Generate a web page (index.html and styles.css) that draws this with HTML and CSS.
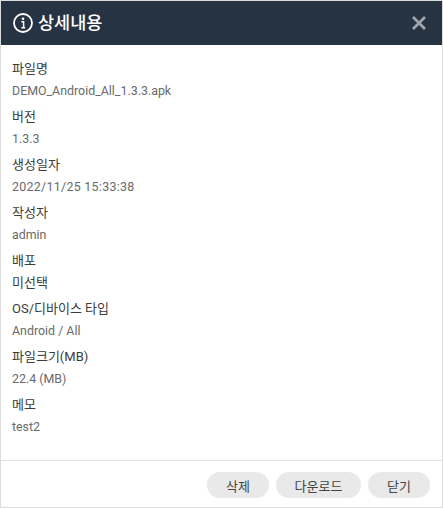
FILE: index.html
```html
<!DOCTYPE html>
<html lang="ko">
<head>
<meta charset="utf-8">
<title>상세내용</title>
<link rel="stylesheet" href="styles.css">
</head>
<body>
<div class="dialog">
  <header class="head">
    <div class="title">
      <svg class="info" viewBox="0 0 22 22" width="22" height="22" aria-hidden="true">
        <circle cx="11" cy="11" r="9" fill="none" stroke="#fff" stroke-width="1.8"/>
        <circle cx="11" cy="6.8" r="1.3" fill="#fff"/>
        <path d="M9.4 9.7H11.6V15.6M9.4 15.7H13.2" fill="none" stroke="#fff" stroke-width="1.5"/>
      </svg>
      <h1>상세내용</h1>
    </div>
    <svg class="close" viewBox="0 0 16 16" width="16" height="16" aria-hidden="true">
      <path d="M2 2L14 14M14 2L2 14" stroke="#a0a6ae" stroke-width="2.8" fill="none"/>
    </svg>
  </header>
  <main class="body">
    <div class="row"><div class="label">파일명</div><div class="value">DEMO_Android_All_1.3.3.apk</div></div>
    <div class="row"><div class="label">버전</div><div class="value">1.3.3</div></div>
    <div class="row"><div class="label">생성일자</div><div class="value value-date">2022/11/25 15:33:38</div></div>
    <div class="row"><div class="label">작성자</div><div class="value">admin</div></div>
    <div class="row"><div class="label">배포</div><div class="value value-dark">미선택</div></div>
    <div class="row"><div class="label">OS/디바이스 타입</div><div class="value">Android / All</div></div>
    <div class="row"><div class="label">파일크기(MB)</div><div class="value">22.4 (MB)</div></div>
    <div class="row"><div class="label">메모</div><div class="value">test2</div></div>
  </main>
  <footer class="foot">
    <button class="btn btn-del">삭제</button>
    <button class="btn btn-down">다운로드</button>
    <button class="btn btn-close">닫기</button>
  </footer>
</div>
</body>
</html>
```
FILE: styles.css
```css
* { box-sizing: border-box; }
html, body { margin: 0; padding: 0; background: #fff; }
body { font-family: Roboto, "Noto Sans CJK KR", sans-serif; }
.dialog {
  width: 443px;
  height: 508px;
  border: 1px solid #dcdcdc;
  display: flex;
  flex-direction: column;
  background: #fff;
}
.head {
  height: 44px;
  flex: none;
  background: #263343;
  display: flex;
  align-items: center;
  justify-content: space-between;
  padding: 0 15px 0 11px;
}
.title { display: flex; align-items: center; gap: 4px; }
.info { display: block; }
.title h1 { margin: 0; font-size: 17.5px; font-weight: 500; color: #fff; line-height: 22px; }
.close { display: block; }
.body { flex: 1; padding: 12px 11px 0; display: flex; flex-direction: column; }
.row { height: 48px; display: flex; flex-direction: column; }
.label { height: 23px; line-height: 24px; font-size: 13px; color: #3c3c3c; }
.value { height: 22px; line-height: 22px; font-size: 12.4px; color: #6a6a6a; }
.value-date { letter-spacing: 0.3px; }
.value-dark { color: #3c3c3c; font-size: 13px; }
.foot {
  height: 47px;
  flex: none;
  border-top: 1px solid #e2e2e2;
  display: flex;
  justify-content: flex-end;
  align-items: flex-start;
  gap: 7px;
  padding: 11px 12px 0 0;
}
.btn {
  height: 26px;
  border: 0;
  border-radius: 13px;
  background: #e9e9e9;
  color: #444;
  font-family: inherit;
  font-size: 13px;
  padding: 0;
}
.btn-del, .btn-close { width: 62px; }
.btn-down { width: 85px; }
```
